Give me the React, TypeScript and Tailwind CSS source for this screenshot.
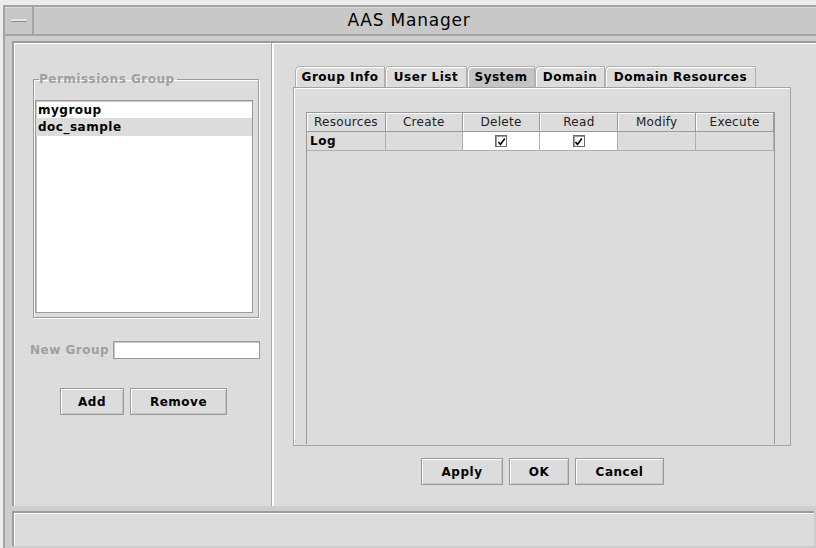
import React from "react";

const sans = "font-['DejaVu_Sans',sans-serif]";

function MotifButton({ label, w }: { label: string; w: string }) {
  return (
    <button
      className={`${w} h-[27px] border border-[#9a9a9a] bg-[#dcdcdc] shadow-[inset_1px_1px_0_#ffffff,inset_-1px_-1px_0_#c4c4c4] text-[12px] font-bold tracking-[0.5px] text-black ${sans}`}
    >
      {label}
    </button>
  );
}

function Check() {
  return (
    <span className="inline-flex h-[12px] w-[12px] items-center justify-center border border-[#6a6a6a] bg-white shadow-[inset_1px_1px_0_#9a9a9a]">
      <svg width="9" height="9" viewBox="0 0 9 9">
        <path d="M1.5 5 L3.5 7.5 L7.8 1.5" stroke="#000" strokeWidth="1.6" fill="none" />
      </svg>
    </span>
  );
}

const tabs = [
  { name: "Group Info", w: "w-[90px]" },
  { name: "User List", w: "w-[82px]" },
  { name: "System", w: "w-[68px]", active: true },
  { name: "Domain", w: "w-[70px]" },
  { name: "Domain Resources", w: "w-[151px]" },
];

const columns = [
  { name: "Resources", w: "w-[79px]" },
  { name: "Create", w: "w-[77px]" },
  { name: "Delete", w: "w-[78px]" },
  { name: "Read", w: "w-[78px]" },
  { name: "Modify", w: "w-[78px]" },
  { name: "Execute", w: "w-[78px]" },
];

export default function App() {
  return (
    <div className={`h-[548px] w-[816px] overflow-hidden bg-[#ececec] pl-[3px] pt-[5px] ${sans}`}>
      <div className="flex h-full flex-col border-l-2 border-t-2 border-[#a4a4a4] bg-[#cdcdcd]">
        {/* title bar */}
        <div className="flex h-[29px] border-b-2 border-[#a4a4a4] bg-[#c8c8c8] shadow-[inset_0_1px_0_#dadada]">
          <div className="flex w-[29px] items-center justify-center border-r-2 border-[#a4a4a4]">
            <div className="h-[3px] w-[16px] rounded-[1px] border-b border-[#8c8c8c] bg-[#e6e6e6]" />
          </div>
          <div className="flex flex-1 items-center justify-center pr-[32px] pt-[1px] text-[17px] tracking-[0.8px] text-black">
            AAS Manager
          </div>
        </div>

        {/* body */}
        <div className="flex flex-1 flex-col gap-[5px] pl-[7px] pt-[5px]">
          <div className="flex h-[465px] border-l-2 border-t-2 border-[#9c9c9c] bg-[#dcdcdc] shadow-[inset_1px_1px_0_#ffffff]">
            {/* left panel */}
            <div className="flex w-[258px] flex-col border-r border-[#a8a8a8] pl-[19px] pt-[27px]">
              <fieldset className="h-[248px] w-[226px] border border-[#9c9c9c] pl-[1px] shadow-[inset_1px_1px_0_#ffffff,1px_1px_0_#ffffff]">
                <legend className="ml-[4px] pr-[2px] text-[12px] font-bold tracking-[0.5px] text-[#a0a0a0]">
                  Permissions Group
                </legend>
                <div className="mt-[12px] h-[213px] w-[218px] border border-[#9a9a9a] bg-white shadow-[inset_1px_1px_0_#c8c8c8]">
                  <div className="px-[2px] pt-[1px] text-[12px] font-bold leading-[16px] tracking-[0.5px] text-black">
                    mygroup
                  </div>
                  <div className="bg-[#dcdcdc] px-[2px] text-[12px] font-bold leading-[18px] tracking-[0.5px] text-black">
                    doc_sample
                  </div>
                </div>
              </fieldset>

              <div className="ml-[-3px] mt-[23px] flex items-center gap-[4px]">
                <span className="text-[12px] font-bold tracking-[0.5px] text-[#a0a0a0]">New Group</span>
                <div className="h-[18px] w-[147px] border border-[#9a9a9a] bg-white shadow-[inset_1px_1px_0_#c8c8c8]" />
              </div>

              <div className="ml-[-19px] mt-[29px] flex justify-center gap-[6px] pl-[2px]">
                <MotifButton label="Add" w="w-[64px]" />
                <MotifButton label="Remove" w="w-[97px]" />
              </div>
            </div>

            {/* right panel */}
            <div className="flex flex-1 flex-col border-l-2 border-white pl-[19px] pt-[23px]">
              <div className="flex pl-[2px]">
                {tabs.map((t) => (
                  <div
                    key={t.name}
                    className={`${t.w} flex h-[21px] items-center justify-center rounded-tl-[5px] border-l border-t border-r border-[#b0b0b0] shadow-[inset_1px_1px_0_#ffffff] text-[12px] font-bold tracking-[0.5px] text-black ${
                      t.active ? "bg-[#c4c4c4]" : "bg-[#dcdcdc]"
                    }`}
                  >
                    {t.name}
                  </div>
                ))}
              </div>
              <div className="h-[359px] w-[498px] border border-[#a4a4a4] pl-[12px] pr-[15px] pt-[24px] shadow-[inset_1px_1px_0_#ffffff]">
                <div className="h-[332px] w-[469px] border-l border-r border-[#9a9a9a]">
                  <div className="flex border-t border-[#9a9a9a]">
                    {columns.map((c) => (
                      <div
                        key={c.name}
                        className={`${c.w} flex h-[19px] items-center justify-center border-b border-r border-[#9a9a9a] shadow-[inset_1px_1px_0_#ffffff] text-[12px] tracking-[0.3px] text-[#222]`}
                      >
                        {c.name}
                      </div>
                    ))}
                  </div>
                  <div className="flex">
                    {columns.map((c, i) => (
                      <div
                        key={c.name}
                        className={`${c.w} flex h-[19px] items-center border-b border-r border-[#b0b0b0] ${
                          i === 2 || i === 3 ? "justify-center bg-white" : "bg-[#dcdcdc]"
                        }`}
                      >
                        {i === 0 && (
                          <span className="pl-[3px] text-[12px] font-bold tracking-[0.5px] text-black">Log</span>
                        )}
                        {(i === 2 || i === 3) && <Check />}
                      </div>
                    ))}
                  </div>
                </div>
              </div>
              <div className="mt-[12px] flex w-[498px] justify-center gap-[6px] pl-[1px]">
                <MotifButton label="Apply" w="w-[82px]" />
                <MotifButton label="OK" w="w-[60px]" />
                <MotifButton label="Cancel" w="w-[89px]" />
              </div>
            </div>
          </div>

          {/* status bar */}
          <div className="h-[35px] w-[802px] border-l-2 border-t-2 border-[#9c9c9c] bg-[#dcdcdc] shadow-[inset_1px_1px_0_#ffffff]" />
        </div>
      </div>
    </div>
  );
}
